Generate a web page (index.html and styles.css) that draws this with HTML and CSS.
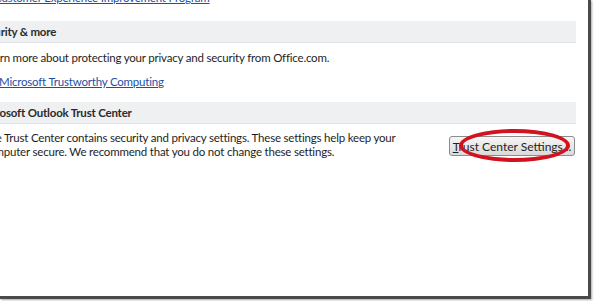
FILE: index.html
```html
<!DOCTYPE html>
<html>
<head>
<meta charset="utf-8">
<link rel="stylesheet" href="styles.css">
</head>
<body>
<div class="frame">
  <div class="content">
    <a class="link top-link" href="#">Customer Experience Improvement Program</a>
    <div class="section-head">Security &amp; more</div>
    <div class="body">
      <p class="text">Learn more about protecting your privacy and security from Office.com.</p>
      <a class="link" href="#">Microsoft Trustworthy Computing</a>
    </div>
    <div class="section-head">Microsoft Outlook Trust Center</div>
    <div class="body row">
      <p class="text">The Trust Center contains security and privacy settings. These settings help keep your<br>computer secure. We recommend that you do not change these settings.</p>
      <div class="btn-wrap">
        <button class="btn"><u>T</u>rust Center Settings...</button>
        <span class="circle"></span>
      </div>
    </div>
  </div>
</div>
</body>
</html>
```
FILE: styles.css
```css
html, body {
  margin: 0;
  padding: 0;
  background: #fff;
  width: 594px;
  height: 301px;
  overflow: hidden;
}
.frame {
  width: 588px;
  height: 296px;
  background: #fff;
  overflow: hidden;
  border-right: 3px solid #4a4a4a;
  border-bottom: 3px solid #4a4a4a;
  box-shadow: 1px 1px 2px rgba(0,0,0,0.35);
  font-family: Lato, "Noto Sans", sans-serif;
  font-size: 11.5px;
  letter-spacing: -0.2px;
  color: #1e1e1e;
}
.content {
  margin-left: -29px;
  margin-top: -10px;
  width: 605px;
}
.link {
  color: #1c4fa5;
  text-decoration: underline;
  display: block;
  width: max-content;
}
.top-link {
  margin-left: 23px;
  line-height: 16px;
}
.section-head {
  margin-top: 15px;
  height: 21px;
  line-height: 21px;
  background: #eff0f2;
  border-bottom: 1px solid #dfe2e6;
  font-weight: bold;
  color: #2b2b2b;
  padding-left: 6px;
}
.section-head + .body + .section-head {
  margin-top: 12px;
}
.body {
  padding-left: 12px;
}
.text {
  margin: 8px 0 0;
  line-height: 14px;
}
.body .link {
  margin-top: 9px;
  margin-left: 16px;
  line-height: 16px;
}
.row {
  display: flex;
  align-items: flex-start;
  justify-content: space-between;
  padding-right: 1px;
}
.row .text {
  margin-top: 7px;
  white-space: nowrap;
}
.btn-wrap {
  position: relative;
  margin-top: 12px;
}
.btn {
  display: block;
  width: 126px;
  height: 20px;
  font: inherit;
  font-size: 12px;
  white-space: nowrap;
  color: #1e1e1e;
  background: linear-gradient(#f6f6f6, #dadada);
  border: 1px solid #8c8c8c;
  border-radius: 3px;
  padding: 0;
}
.circle {
  position: absolute;
  left: 10px;
  top: -7px;
  width: 103px;
  height: 25px;
  border: 4px solid #d2121f;
  border-radius: 50%;
}
```
